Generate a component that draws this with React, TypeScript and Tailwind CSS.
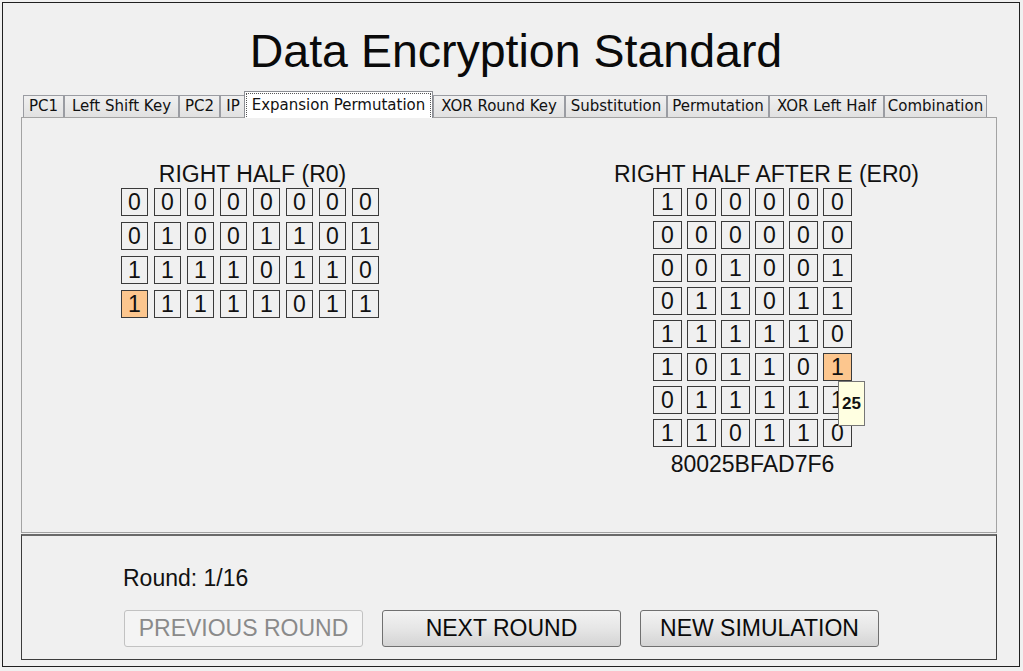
import React from "react";

const SANS = "font-['Liberation_Sans',Arial,sans-serif]";
const UI = "font-['DejaVu_Sans',Tahoma,sans-serif]";

const tabs = [
  { label: "PC1", w: "w-[41px]" },
  { label: "Left Shift Key", w: "w-[115px]" },
  { label: "PC2", w: "w-[41px]" },
  { label: "IP", w: "w-[26px]" },
  { label: "Expansion Permutation", w: "w-[189px]", active: true },
  { label: "XOR Round Key", w: "w-[132px]" },
  { label: "Substitution", w: "w-[102px]" },
  { label: "Permutation", w: "w-[102px]" },
  { label: "XOR Left Half", w: "w-[115px]" },
  { label: "Combination", w: "w-[103px]" },
];

const r0 = ["00000000", "01001101", "11110110", "11111011"];
const er0 = [
  "100000",
  "000000",
  "001001",
  "011011",
  "111110",
  "101101",
  "011111",
  "110110",
];

function Cell({ v, hot, w }: { v: string; hot?: boolean; w: string }) {
  return (
    <div
      className={`${w} h-[28px] flex items-center justify-center border border-[#3a3a3a] text-[23px] leading-none text-[#111] ${
        hot ? "bg-[#fcc68e]" : "bg-[#f0f0f0]"
      }`}
    >
      {v}
    </div>
  );
}

function Button({ label, disabled }: { label: string; disabled?: boolean }) {
  return (
    <button
      className={`w-[239px] h-[37px] rounded-[3px] border text-[23px] leading-none ${
        disabled
          ? "border-[#c2c2c2] bg-[#f4f4f4] text-[#8a8a8a]"
          : "border-[#707070] bg-linear-to-b from-[#f3f3f3] via-[#e6e6e6] to-[#d4d4d4] text-[#0a0a0a]"
      }`}
    >
      {label}
    </button>
  );
}

export default function App() {
  return (
    <div className={`w-[1023px] h-[671px] bg-[#f0f0f0] pt-[2px] pl-[2px] ${SANS}`}>
      <div className="w-[1018px] h-[665px] border border-[#202020] flex flex-col">
        {/* TITLE */}
        <div className="h-[88px] flex items-center justify-center pl-[10px] pt-[8px] text-[46.5px] leading-none text-[#0a0a0a]">
          Data Encryption Standard
        </div>

        {/* TABS */}
        <div className={`h-[26px] pl-[20px] flex items-end ${UI} text-[15px] leading-none`}>
          {tabs.map((t) =>
            t.active ? (
              <div
                key={t.label}
                className={`${t.w} h-[27px] mb-[-1px] ml-[-2px] relative z-10 bg-white border border-b-0 border-[#8c8e94] p-[1px]`}
              >
                <div className="h-full border border-dotted border-[#555] border-b-0 flex items-center justify-center text-[#111]">
                  {t.label}
                </div>
              </div>
            ) : (
              <div
                key={t.label}
                className={`${t.w} h-[22px] border border-b-0 border-[#9a9ca2] bg-linear-to-b from-[#f0f0f0] to-[#e1e1e1] flex items-center justify-center text-[#111]`}
              >
                {t.label}
              </div>
            )
          )}
        </div>

        {/* CONTENT PANEL */}
        <div className="ml-[18px] w-[976px] h-[416px] border border-[#a3a3a3] bg-[#f0f0f0] pt-[45px] flex items-start">
          {/* LEFT */}
          <div className="ml-[99px] w-[258px] flex flex-col items-center">
            <div className="ml-[5px] text-[23px] leading-none mb-[2px] text-[#111]">RIGHT HALF (R0)</div>
            <div className="flex flex-col gap-[6px]">
              {r0.map((row, i) => (
                <div key={i} className="flex gap-[6px]">
                  {row.split("").map((v, j) => (
                    <Cell key={j} v={v} w="w-[27px]" hot={i === 3 && j === 0} />
                  ))}
                </div>
              ))}
            </div>
          </div>

          {/* RIGHT */}
          <div className="ml-[235px] flex flex-col items-start">
            <div className="text-[23px] leading-none mb-[2px] text-[#111]">RIGHT HALF AFTER E (ER0)</div>
            <div className="ml-[39px] flex flex-col items-center">
              <div className="relative flex flex-col gap-[5px]">
                {er0.map((row, i) => (
                  <div key={i} className="flex gap-[5px]">
                    {row.split("").map((v, j) => (
                      <Cell key={j} v={v} w="w-[29px]" hot={i === 5 && j === 5} />
                    ))}
                  </div>
                ))}
                {/* TOOLTIP */}
                <div className="absolute left-[185px] top-[193px] w-[27px] h-[45px] bg-[#ffffe1] border border-[#767676] flex items-center pl-[3px] font-bold text-[17px] leading-none text-[#111]">
                  25
                </div>
              </div>
              <div className="mt-[6px] text-[23px] leading-none text-[#111]">80025BFAD7F6</div>
            </div>
          </div>
        </div>

        {/* BOTTOM PANEL */}
        <div className="mt-[1px] ml-[18px] w-[976px] h-[126px] border border-[#3c3c3c] border-t-2 border-t-[#6a6a6a] pt-[31px]">
          <div className="pl-[101px] text-[23px] leading-none text-[#111]">Round: 1/16</div>
          <div className="mt-[20px] pl-[102px] flex gap-[19px]">
            <Button label="PREVIOUS ROUND" disabled />
            <Button label="NEXT ROUND" />
            <Button label="NEW SIMULATION" />
          </div>
        </div>
      </div>
    </div>
  );
}
